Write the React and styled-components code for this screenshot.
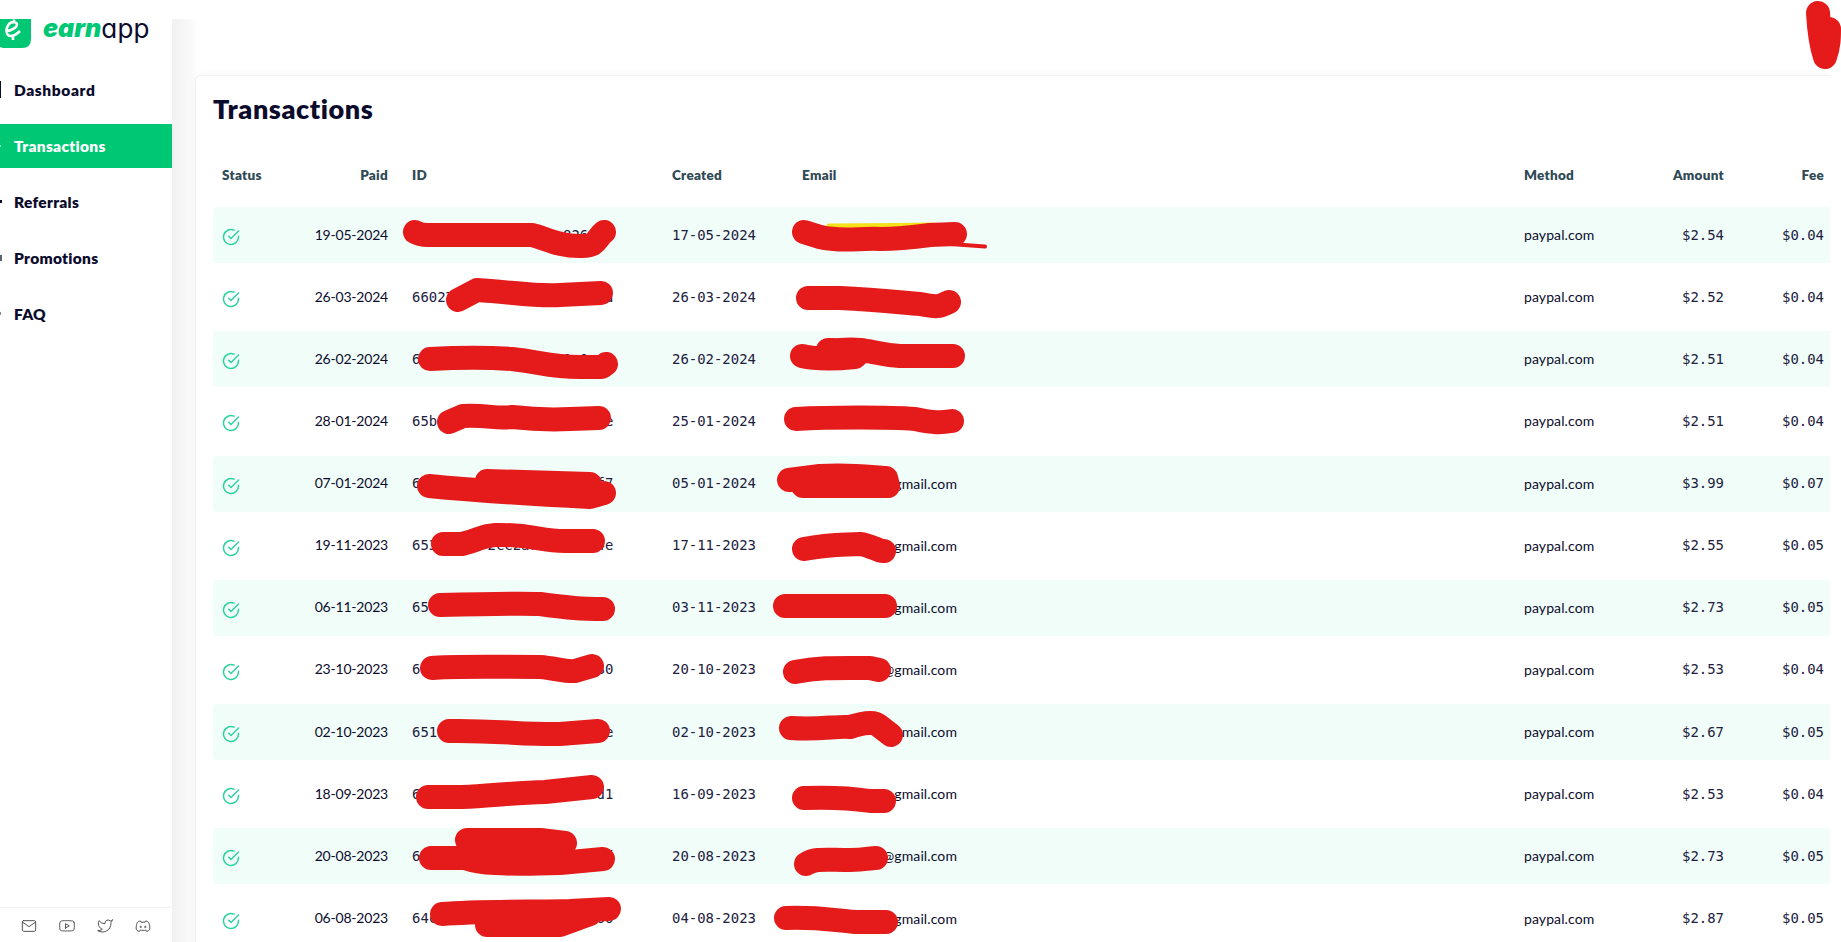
import styled, { createGlobalStyle } from "styled-components";
import { FiMail, FiYoutube, FiTwitter, FiCheckCircle } from "react-icons/fi";

const GlobalStyle = createGlobalStyle`
  * {
    box-sizing: border-box;
  }

  body {
    margin: 0;
    background: #ffffff;
    font-family: Lato, "Liberation Sans", sans-serif;
    color: #0b0b2c;
    overflow: hidden;
  }
`;

const Page = styled.div`
  position: relative;
  display: flex;
  height: 942px;
  padding: 19px 11px 0 0;
  overflow: hidden;
`;

const Sidebar = styled.aside`
  display: flex;
  flex-direction: column;
  width: 172px;
  flex-shrink: 0;
  background: #ffffff;
`;

const LogoRow = styled.div`
  display: flex;
  height: 49px;
`;

const LogoMark = styled.svg`
  width: 31px;
  height: 29px;
  margin-right: 12px;
`;

const LogoText = styled.div`
  display: flex;
  font-family: Inter, sans-serif;
  font-feature-settings: "cv11";
  line-height: 19px;
`;

const Earn = styled.span`
  color: #00c774;
  font-size: 25px;
  font-weight: 900;
  font-style: italic;
  letter-spacing: 0;
`;

const AppWord = styled.span`
  font-size: 26px;
  font-weight: 400;
  letter-spacing: 0.2px;
`;

const Nav = styled.nav`
  display: flex;
  flex-direction: column;
  gap: 12px;
  flex: 1;
`;

const NavItem = styled.a`
  display: flex;
  align-items: center;
  height: 44px;
  padding-bottom: 1px;
  background: ${({ $active }) => ($active ? "#00c774" : "transparent")};
  color: ${({ $active }) => ($active ? "#ffffff" : "#0b0b2c")};
  font-size: 15.5px;
  font-weight: 800;
  letter-spacing: ${({ $tracking }) => $tracking || 0.3}px;
`;

const NavTick = styled.span`
  width: ${({ $w }) => $w}px;
  height: ${({ $h }) => $h}px;
  margin-right: ${({ $w }) => 14 - $w}px;
  background: ${({ $color }) => $color};
`;

const Social = styled.div`
  display: flex;
  align-items: center;
  gap: 22px;
  height: 35px;
  padding: 2px 0 0 21px;
  border-top: 1px solid #f0f0f0;
  color: #555555;
`;

const Main = styled.main`
  flex: 1;
  min-width: 0;
  padding: 56px 0 0 23px;
  background: linear-gradient(to right, #f1f1f1 0, #fafafa 20px, #ffffff 26px);
`;

const Card = styled.section`
  height: 900px;
  padding: 17px 0 0 17px;
  border: 1px solid #f2f2f2;
  border-right: 0;
  border-radius: 6px 0 0 0;
  background: #ffffff;
  box-shadow: 0 0 10px rgba(0, 0, 0, 0.04);
  clip-path: inset(-20px 0 0 -20px);
`;

const Title = styled.h1`
  margin: 0;
  font-size: 27px;
  line-height: 32px;
  font-weight: 800;
  letter-spacing: 0.6px;
`;

const Row = styled.div`
  display: grid;
  grid-template-columns: 90px 76px 24px 260px 130px 722px 112px 88px 100px;
  align-items: center;
  height: 56px;
  margin-bottom: 6.15px;
  padding-left: 9px;
  border-radius: 4px 0 0 4px;
  background: ${({ $striped }) => ($striped ? "#f1fdf9" : "transparent")};
  white-space: pre;
`;

const HeadRow = styled(Row)`
  height: 48px;
  margin: 26px 0 8px;
  color: #2f4a55;
  font-size: 13.5px;
  font-weight: 800;
  letter-spacing: 0.27px;
`;

const HeadCell = styled.div`
  text-align: ${({ $right }) => ($right ? "right" : "left")};
`;

const Cell = styled.div`
  padding-bottom: 1px;
  text-align: ${({ $right }) => ($right ? "right" : "left")};
  font-size: 14px;
`;

const PaidCell = styled(Cell)`
  padding-bottom: 2px;
  letter-spacing: -0.2px;
`;

const MethodCell = styled(Cell)`
  letter-spacing: 0.1px;
`;

const Mono = styled(Cell)`
  font-family: "DejaVu Sans Mono", monospace;
  font-size: 13.95px;
  color: #20203e;
`;

const Email = styled(Cell)`
  width: 155px;
  text-align: right;
  letter-spacing: 0.1px;
`;

const Status = styled.div`
  display: flex;
  padding-top: 4px;
  color: #2bd3a0;
`;

const Marks = styled.svg`
  position: absolute;
  inset: 0;
  width: 1841px;
  height: 942px;
  pointer-events: none;
`;

const navItems = [
  { label: "Dashboard", w: 1, h: 17, color: "#0b0b2c", tracking: 0.6 },
  { label: "Transactions", w: 1, h: 2, color: "#8be5bf", active: true },
  { label: "Referrals", w: 2, h: 3, color: "#0b0b2c" },
  { label: "Promotions", w: 2, h: 6, color: "#5c6470" },
  { label: "FAQ", w: 1, h: 3, color: "#8a8a8a" },
];

const rows = [
  ["19-05-2024", "                  826", "17-05-2024", "", "$2.54", "$0.04"],
  ["26-03-2024", "66027                  d", "26-03-2024", "", "$2.52", "$0.04"],
  ["26-02-2024", "6                60 0 f", "26-02-2024", "", "$2.51", "$0.04"],
  ["28-01-2024", "65b                    e", "25-01-2024", "", "$2.51", "$0.04"],
  ["07-01-2024", "6                     f7", "05-01-2024", "gmail.com", "$3.99", "$0.07"],
  ["19-11-2023", "653      2cc2a7c      4e", "17-11-2023", "gmail.com", "$2.55", "$0.05"],
  ["06-11-2023", "65", "03-11-2023", "gmail.com", "$2.73", "$0.05"],
  ["23-10-2023", "6                     80", "20-10-2023", "@gmail.com", "$2.53", "$0.04"],
  ["02-10-2023", "651                    e", "02-10-2023", "gmail.com", "$2.67", "$0.05"],
  ["18-09-2023", "6                     d1", "16-09-2023", "gmail.com", "$2.53", "$0.04"],
  ["20-08-2023", "6                   6  f", "20-08-2023", "@gmail.com", "$2.73", "$0.05"],
  ["06-08-2023", "64c                   60", "04-08-2023", "gmail.com", "$2.87", "$0.05"],
];

// marker strokes over the private values
const strokes = [
  // id column
  "M415 232 Q420 235 428 235 H532 C545 238 560 247 582 246 C598 246 596 238 604 232",
  "M458 300 L477 290 C510 292 540 297 560 295 L601 293",
  "M430 359 C450 358 480 357 512 359 C540 362 550 367 580 367 H602 L606 364",
  "M449 422 L463 416 C490 415 495 419 512 417 C530 419 550 420 570 419 L599 418",
  "M429 486 C470 490 530 494 590 497 L604 493",
  "M487 481 L590 484",
  "M443 544 H462 C480 540 480 536 495 535 C530 534 540 541 565 541 H593",
  "M440 605 C480 604 520 603 540 604 C570 608 580 609 603 609",
  "M432 668 C450 666 500 667 540 667 C555 668 565 672 575 671 L592 666",
  "M449 731 C490 730 530 735 560 734 L598 731",
  "M428 797 H462 C490 796 510 793 545 792 L592 787",
  "M431 858 H465 C480 863 500 865 560 863 L603 859",
  "M467 840 H540 L565 843 L560 853 H480",
  "M442 914 C480 911 530 912 570 911 L609 909",
  "M487 925 H560 L590 914",
  // email column
  "M804 232 L820 237 C840 242 860 238 880 239 C900 239 915 237 930 235 L955 234",
  "M808 298 H840 C880 300 905 303 920 304 C940 308 940 306 949 302",
  "M802 356 C815 359 835 359 855 357 L860 352 C855 350 850 350 828 350 M840 350 C870 348 870 354 900 356 H953",
  "M796 419 C830 417 890 417 915 419 C935 423 940 423 952 421",
  "M789 480 L820 476 C850 474 870 477 886 478 L888 486 M888 486 H803 M792 480 H884",
  "M804 549 C830 544 840 545 860 544 C870 545 880 552 884 551",
  "M785 606 H885",
  "M795 672 C820 667 840 668 870 668 L879 670",
  "M791 728 C820 730 835 726 850 727 C865 722 875 722 878 725 L891 735",
  "M804 798 C830 797 850 798 870 801 L884 801",
  "M806 864 C815 858 825 860 850 860 C865 860 870 858 876 858",
  "M786 918 C820 917 830 920 855 922 H886",
  // avatar
  "M1818 13 C1819 30 1821 45 1825 57 C1829 45 1829 38 1829 29",
];

function StatusIcon() {
  return <FiCheckCircle size={18} strokeWidth={2} />;
}

function Discord() {
  return (
    <svg width="16" height="16" viewBox="0 0 16 16" fill="none" stroke="currentColor">
      <path d="M5.5 3 C3.5 3.2 2.6 3.8 2.2 4.8 C1.2 7 1 9.5 1.3 11.6 C2 12.7 3.3 13.2 4.5 13.4 L5.3 12 C7 12.5 9 12.5 10.7 12 L11.5 13.4 C12.7 13.2 14 12.7 14.7 11.6 C15 9.5 14.8 7 13.8 4.8 C13.4 3.8 12.5 3.2 10.5 3 L10 4.2 H6 Z" />
      <circle cx="5.7" cy="8.9" r="0.7" />
      <circle cx="10.3" cy="8.9" r="0.7" />
    </svg>
  );
}

function App() {
  return (
    <Page>
      <GlobalStyle />
      <Sidebar>
        <LogoRow>
          <LogoMark viewBox="0 0 31 29">
            <path d="M0 0 H31 V20 Q31 29 22 29 H3 L0 28 Z" fill="#00c774" />
            <path
              d="M6 12 C12 12 17 8 17 5.5 C17 3 12 2 9 5 C5 10 6 17 11 17 C15 17 17 15 20 12 M14 0.5 V3 M13 17 V21"
              fill="none"
              stroke="#ffffff"
              strokeWidth="2.6"
            />
          </LogoMark>
          <LogoText>
            <Earn>earn</Earn>
            <AppWord>app</AppWord>
          </LogoText>
        </LogoRow>
        <Nav>
          {navItems.map((item) => (
            <NavItem key={item.label} $active={item.active} $tracking={item.tracking}>
              <NavTick $w={item.w} $h={item.h} $color={item.color} />
              {item.label}
            </NavItem>
          ))}
        </Nav>
        <Social>
          <FiMail size={16} strokeWidth={1.5} />
          <FiYoutube size={16} strokeWidth={1.5} />
          <FiTwitter size={16} strokeWidth={1.5} />
          <Discord />
        </Social>
      </Sidebar>

      <Main>
        <Card>
          <Title>Transactions</Title>
          <HeadRow>
            <HeadCell>Status</HeadCell>
            <HeadCell $right>Paid</HeadCell>
            <span />
            <HeadCell>ID</HeadCell>
            <HeadCell>Created</HeadCell>
            <HeadCell>Email</HeadCell>
            <HeadCell>Method</HeadCell>
            <HeadCell $right>Amount</HeadCell>
            <HeadCell $right>Fee</HeadCell>
          </HeadRow>
          {rows.map(([paid, id, created, email, amount, fee], i) => (
            <Row key={paid} $striped={i % 2 === 0}>
              <Status>
                <StatusIcon />
              </Status>
              <PaidCell $right>{paid}</PaidCell>
              <span />
              <Mono>{id}</Mono>
              <Mono>{created}</Mono>
              <Email>{email}</Email>
              <MethodCell>paypal.com</MethodCell>
              <Mono $right>{amount}</Mono>
              <Mono $right>{fee}</Mono>
            </Row>
          ))}
        </Card>
      </Main>

      <Marks viewBox="0 0 1841 942" fill="none" strokeLinecap="round" strokeLinejoin="round">
        <path d="M829 226 L895 225.5 L934 225" stroke="#f5e01a" strokeWidth="5" />
        {strokes.map((d) => (
          <path key={d} d={d} stroke="#e51b1b" strokeWidth="24" />
        ))}
        <path d="M950 244 L985 246.5" stroke="#e51b1b" strokeWidth="4" />
      </Marks>
    </Page>
  );
}

export default App;
